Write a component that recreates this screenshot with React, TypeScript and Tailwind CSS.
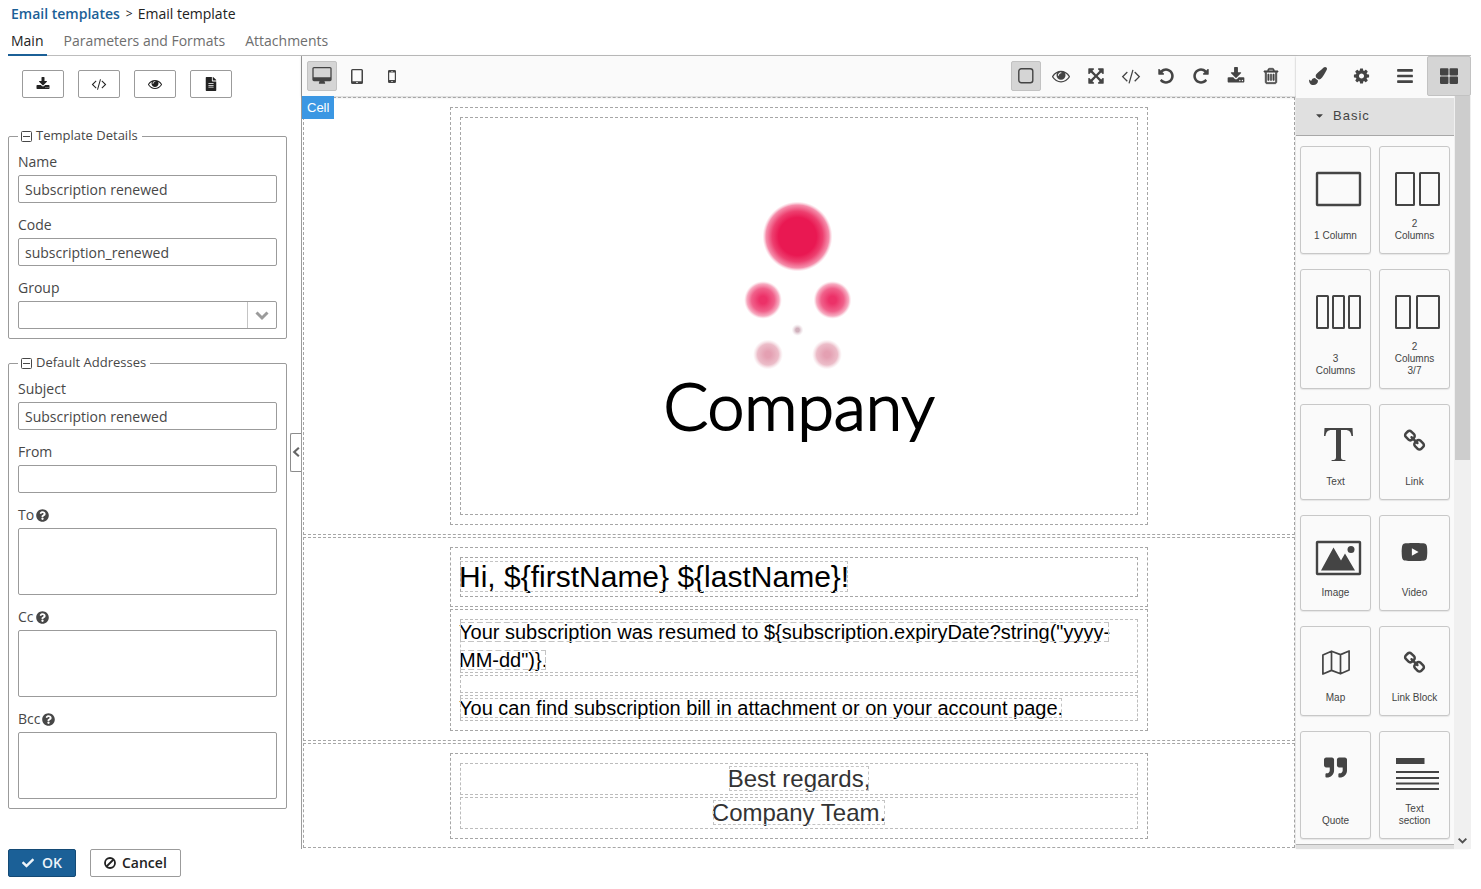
import React from "react";
import {
  FaBars,
  FaCaretDown,
  FaCheck,
  FaFileAlt,
  FaPaintBrush,
  FaQuestionCircle,
  FaQuoteRight,
  FaThLarge,
  FaYoutube,
} from "react-icons/fa";

const paths = {
  download:
    "M1344 1344q0-26-19-45t-45-19-45 19-19 45 19 45 45 19 45-19 19-45zm256 0q0-26-19-45t-45-19-45 19-19 45 19 45 45 19 45-19 19-45zm128-224v320q0 40-28 68t-68 28h-1472q-40 0-68-28t-28-68v-320q0-40 28-68t68-28h465l135 136q58 56 136 56t136-56l136-136h464q40 0 68 28t28 68zm-325-569q17 41-14 70l-448 448q-18 19-45 19t-45-19l-448-448q-31-29-14-70 17-39 59-39h256v-448q0-26 19-45t45-19h256q26 0 45 19t19 45v448h256q42 0 59 39z",
  eye: "M1664 960q-152-236-381-353 61 104 61 225 0 185-131.5 316.5t-316.5 131.5-316.5-131.5-131.5-316.5q0-121 61-225-229 117-381 353 133 205 333.5 326.5t434.5 121.5 434.5-121.5 333.5-326.5zm-720-384q0-20-14-34t-34-14q-125 0-214.5 89.5t-89.5 214.5q0 20 14 34t34 14 34-14 14-34q0-86 61-147t147-61q20 0 34-14t14-34zm848 384q0 34-20 69-140 230-376.5 368.5t-499.5 138.5-499.5-139-376.5-368q-20-35-20-69t20-69q140-229 376.5-368t499.5-139 499.5 139 376.5 368q20 35 20 69z",
  code: "M553 1399l-50 50q-10 10-23 10t-23-10l-466-466q-10-10-10-23t10-23l466-466q10-10 23-10t23 10l50 50q10 10 10 23t-10 23l-393 393 393 393q10 10 10 23t-10 23zm591-1067l-373 1291q-4 13-15.5 19.5t-23.5 2.5l-62-17q-13-4-19.5-15.5t-2.5-24.5l373-1291q4-13 15.5-19.5t23.5-2.5l62 17q13 4 19.5 15.5t2.5 24.5zm657 651l-466 466q-10 10-23 10t-23-10l-50-50q-10-10-10-23t10-23l393-393-393-393q-10-10-10-23t10-23l50-50q10-10 23-10t23 10l466 466q10 10 10 23t-10 23z",
  expand:
    "M1411 541l-355 355 355 355 144-144q29-31 70-14 39 17 39 59v448q0 26-19 45t-45 19h-448q-42 0-59-40-17-39 14-69l144-144-355-355-355 355 144 144q31 30 14 69-17 40-59 40h-448q-26 0-45-19t-19-45v-448q0-42 40-59 39-17 69 14l144 144 355-355-355-355-144 144q-19 19-45 19-12 0-24-5-40-17-40-59v-448q0-26 19-45t45-19h448q42 0 59 40 17 39-14 69l-144 144 355 355 355-355-144-144q-31-30-14-69 17-40 59-40h448q26 0 45 19t19 45v448q0 42-39 59-13 5-25 5-26 0-45-19z",
  undo: "M1664 896q0 156-61 298t-164 245-245 164-298 61q-172 0-327-72.5t-264-204.5q-7-10-6.5-22.5t8.5-20.5l137-138q10-9 25-9 16 2 23 12 73 95 179 147t225 52q104 0 198.5-40.5t163.5-109.5 109.5-163.5 40.5-198.5-40.5-198.5-109.5-163.5-163.5-109.5-198.5-40.5q-98 0-188 35.5t-160 101.5l137 138q31 30 14 69-17 40-59 40h-448q-26 0-45-19t-19-45v-448q0-42 40-59 39-17 69 14l130 129q107-101 244.5-156.5t284.5-55.5q156 0 298 61t245 164 164 245 61 298z",
  trash:
    "M704 736v576q0 14-9 23t-23 9h-64q-14 0-23-9t-9-23v-576q0-14 9-23t23-9h64q14 0 23 9t9 23zm256 0v576q0 14-9 23t-23 9h-64q-14 0-23-9t-9-23v-576q0-14 9-23t23-9h64q14 0 23 9t9 23zm256 0v576q0 14-9 23t-23 9h-64q-14 0-23-9t-9-23v-576q0-14 9-23t23-9h64q14 0 23 9t9 23zm128 724v-948h-896v948q0 22 7 40.5t14.5 27 10.5 8.5h832q3 0 10.5-8.5t14.5-27 7-40.5zm-672-1076h448l-48-117q-7-9-17-11h-317q-10 2-17 11zm928 32v64q0 14-9 23t-23 9h-96v948q0 83-47 143.5t-113 60.5h-832q-66 0-113-58.5t-47-141.5v-952h-96q-14 0-23-9t-9-23v-64q0-14 9-23t23-9h309l70-167q15-37 54-63t79-26h320q40 0 79 26t54 63l70 167h309q14 0 23 9t9 23z",
  cog: "M1152 896q0-106-75-181t-181-75-181 75-75 181 75 181 181 75 181-75 75-181zm512-109v222q0 12-8 23t-20 13l-185 28q-19 54-39 91 35 50 107 138 10 12 10 25t-9 23q-27 37-99 108t-94 71q-12 0-26-9l-138-108q-44 23-91 38-16 136-29 186-7 28-36 28h-222q-14 0-24.5-8.5t-11.5-21.5l-28-184q-49-16-90-37l-141 107q-10 9-25 9-14 0-25-11-126-114-165-168-7-10-7-23 0-12 8-23 15-21 51-66.5t54-70.5q-27-50-41-99l-183-27q-13-2-21-12.5t-8-23.5v-222q0-12 8-23t19-13l186-28q14-46 39-92-40-57-107-138-10-12-10-24 0-10 9-23 26-36 98.5-107.5t94.5-71.5q13 0 26 10l138 107q44-23 91-38 16-136 29-186 7-28 36-28h222q14 0 24.5 8.5t11.5 21.5l28 184q49 16 90 37l142-107q9-9 24-9 13 0 25 10 129 119 165 170 7 8 7 22 0 12-8 23-15 21-51 66.5t-54 70.5q26 50 41 98l183 28q13 2 21 12.5t8 23.5z",
  link: "M1520 1216q0-40-28-68l-208-208q-28-28-68-28-42 0-72 32 3 3 19 18.5t21.5 21.5 15 19 13 25.5 3.5 27.5q0 40-28 68t-68 28q-15 0-27.5-3.5t-25.5-13-19-15-21.5-21.5-18.5-19q-33 31-33 73 0 40 28 68l206 207q27 27 68 27 40 0 68-26l147-146q28-28 28-67zm-703-705q0-40-28-68l-206-207q-28-28-68-28-39 0-68 27l-147 146q-28 28-28 67 0 40 28 68l208 208q27 27 68 27 42 0 72-31-3-3-19-18.5t-21.5-21.5-15-19-13-25.5-3.5-27.5q0-40 28-68t68-28q15 0 27.5 3.5t25.5 13 19 15 21.5 21.5 18.5 19q33-31 33-73zm895 705q0 120-85 203l-147 146q-83 83-203 83-121 0-204-85l-206-207q-83-83-83-203 0-123 88-209l-88-88q-86 88-208 88-120 0-204-84l-208-208q-84-84-84-204t85-203l147-146q83-83 203-83 121 0 204 85l206 207q83 83 83 203 0 123-88 209l88 88q86-88 208-88 120 0 204 84l208 208q84 84 84 204z",
  desktop:
    "M1728 992v-832q0-13-9.5-22.5t-22.5-9.5h-1600q-13 0-22.5 9.5t-9.5 22.5v832q0 13 9.5 22.5t22.5 9.5h1600q13 0 22.5-9.5t9.5-22.5zm128-832v1088q0 66-47 113t-113 47h-544q0 37 16 77.5t32 71 16 43.5q0 26-19 45t-45 19h-512q-26 0-45-19t-19-45q0-14 16-44t32-70 16-78h-544q-66 0-113-47t-47-113v-1088q0-66 47-113t113-47h1600q66 0 113 47t47 113z",
};

function Glyph({ name, className }: { name: keyof typeof paths; className: string }) {
  return (
    <svg viewBox="-64 0 1920 1792" fill="currentColor" aria-hidden="true" className={className}>
      <path d={paths[name]} />
    </svg>
  );
}

function Tablet() {
  return (
    <svg viewBox="0 0 12 15" className="h-[15px] w-3" aria-hidden="true">
      <path
        fill="currentColor"
        fillRule="evenodd"
        d="M1.5 0h9A1.5 1.5 0 0 1 12 1.500v12a1.500 1.500 0 0 1-1.500 1.500h-9A1.500 1.500 0 0 1 0 13.500v-12A1.500 1.500 0 0 1 1.500 0zM1.500 1.200v11h9v-11zM5.300 13.100v1h1.400v-1z"
      />
    </svg>
  );
}

function Phone() {
  return (
    <svg viewBox="0 0 8 13" className="h-[13px] w-2" aria-hidden="true">
      <path
        fill="currentColor"
        fillRule="evenodd"
        d="M1.300 0h5.400A1.300 1.300 0 0 1 8 1.300v10.400A1.300 1.300 0 0 1 6.700 13H1.300A1.300 1.300 0 0 1 0 11.700V1.300A1.300 1.300 0 0 1 1.300 0zM1.200 2.500v7.500h5.600V2.500zM3 1v.6h2V1zM3.400 11v1h1.200v-1z"
      />
    </svg>
  );
}

function Chevron({ className, d }: { className: string; d: string }) {
  return (
    <svg viewBox="0 0 14 14" fill="none" stroke="currentColor" strokeWidth="3" aria-hidden="true" className={className}>
      <path d={d} />
    </svg>
  );
}

const inputBase =
  "block w-full rounded-[2px] border border-[#9b9b9b] bg-white px-1.5 text-sm text-[#474747] outline-none";

function Field({ label, id, value, area, help }: { label: string; id: string; value?: string; area?: boolean; help?: boolean }) {
  return (
    <div>
      <label htmlFor={id} className="mb-[3px] flex h-5 items-center gap-0.5 text-sm">
        {label}
        {help && <FaQuestionCircle className="size-[13px]" />}
      </label>
      {area ? (
        <textarea id={id} className={`${inputBase} h-[67px] resize-none`} />
      ) : (
        <input id={id} defaultValue={value} className={`${inputBase} h-7`} />
      )}
    </div>
  );
}

function Group({ title, children }: { title: string; children: React.ReactNode }) {
  return (
    <fieldset className="min-w-0 rounded-[2px] border border-[#9b9b9b] px-[9px] pb-[9px]">
      <legend className="flex h-5 items-center gap-1 pr-1 pl-[3px] text-[13px]">
        <svg viewBox="0 0 11 11" fill="none" stroke="currentColor" className="size-[11px]" aria-hidden="true">
          <rect x=".5" y=".5" width="10" height="10" rx="1" />
          <path d="M2 5.500h7" />
        </svg>
        {title}
      </legend>
      <div className="flex flex-col gap-3 pt-1.5">{children}</div>
    </fieldset>
  );
}

function SmallButton({ label, children }: { label: string; children: React.ReactNode }) {
  return (
    <button
      aria-label={label}
      className="flex h-7 w-[42px] items-center justify-center rounded-[2px] border border-[#9b9b9b] bg-white text-[#222]"
    >
      {children}
    </button>
  );
}

function Sidebar() {
  return (
    <aside className="relative w-[293px] shrink-0 pr-3.5 pb-10">
      <div className="flex gap-3.5 px-3.5 pt-3.5 pb-7">
        <SmallButton label="Export">
          <Glyph name="download" className="h-[14px] w-4" />
        </SmallButton>
        <SmallButton label="View code">
          <Glyph name="code" className="h-[14px] w-4" />
        </SmallButton>
        <SmallButton label="Preview">
          <Glyph name="eye" className="h-[14px] w-4" />
        </SmallButton>
        <SmallButton label="Report">
          <FaFileAlt className="h-[14px] w-3" />
        </SmallButton>
      </div>
      <div className="flex flex-col gap-3.5">
        <Group title="Template Details">
          <Field label="Name" id="name" value="Subscription renewed" />
          <Field label="Code" id="code" value="subscription_renewed" />
          <div>
            <label htmlFor="group" className="mb-[3px] flex h-5 items-center text-sm">
              Group
            </label>
            <div className="relative">
              <select id="group" className={`${inputBase} h-7 appearance-none`}>
                <option value=""></option>
              </select>
              <span className="pointer-events-none absolute inset-y-px right-px flex w-[29px] items-center justify-center border-l border-[#c4c4c4] text-[#9b9b9b]">
                <Chevron className="size-[14px]" d="M1.500 4.500L7 10l5.500-5.500" />
              </span>
            </div>
          </div>
        </Group>
        <Group title="Default Addresses">
          <Field label="Subject" id="subject" value="Subscription renewed" />
          <Field label="From" id="from" value="" />
          <Field label="To" id="to" area help />
          <Field label="Cc" id="cc" area help />
          <Field label="Bcc" id="bcc" area help />
        </Group>
      </div>
      <button
        aria-label="Collapse panel"
        className="absolute top-[377px] right-0 flex h-[39px] w-[11px] items-center justify-center rounded-l-[2px] border border-r-0 border-[#8c8c8c] bg-white pb-0.5 text-[#666]"
      >
        <Chevron className="h-3 w-[10px]" d="M11 1L4.500 7l6.500 6" />
      </button>
    </aside>
  );
}

function ToolButton({ label, active, children }: { label: string; active?: boolean; children: React.ReactNode }) {
  return (
    <button
      aria-label={label}
      className={`flex size-[30px] items-center justify-center rounded-[2px] ${
        active ? "border border-[#c2c2c2] bg-[#d5d5d5]" : ""
      }`}
    >
      {children}
    </button>
  );
}

const cell = "outline-1 -outline-offset-2 outline-dashed outline-[#a6a6a6]";
const soft = "outline-1 -outline-offset-2 outline-dashed outline-[#bcbcbc]";
const inline = "outline-1 -outline-offset-2 outline-dashed outline-[#c4c4c4]";

function Logo() {
  return (
    <svg viewBox="649 196 300 176" className="h-44 w-[300px]" role="img" aria-label="Company logo">
      <defs>
        <radialGradient id="big">
          <stop offset="0.540" stopColor="#e91852" />
          <stop offset="0.720" stopColor="#ed3f6f" />
          <stop offset="0.900" stopColor="#f58fac" />
          <stop offset="1" stopColor="#f9c3d2" stopOpacity="0" />
        </radialGradient>
        <radialGradient id="mid">
          <stop offset="0.200" stopColor="#ec3168" />
          <stop offset="0.600" stopColor="#f0608a" />
          <stop offset="0.850" stopColor="#f7adc2" />
          <stop offset="1" stopColor="#fbd5df" stopOpacity="0" />
        </radialGradient>
        <radialGradient id="pale">
          <stop offset="0.200" stopColor="#e4a0b2" />
          <stop offset="0.700" stopColor="#ecbdc9" />
          <stop offset="1" stopColor="#f3d9df" stopOpacity="0" />
        </radialGradient>
        <radialGradient id="tiny">
          <stop offset="0.300" stopColor="#d0b0bc" />
          <stop offset="1" stopColor="#e8d8de" stopOpacity="0" />
        </radialGradient>
      </defs>
      <circle cx="797.500" cy="236.500" r="35" fill="url(#big)" />
      <circle cx="763" cy="300" r="19" fill="url(#mid)" />
      <circle cx="832.500" cy="300" r="19" fill="url(#mid)" />
      <circle cx="797.500" cy="330" r="6" fill="url(#tiny)" />
      <circle cx="768" cy="354.500" r="15" fill="url(#pale)" />
      <circle cx="827" cy="354.500" r="15" fill="url(#pale)" />
    </svg>
  );
}

function Editor() {
  return (
    <main className="min-w-0 grow border-l border-[#9b9b9b] font-['Liberation_Sans',Arial,sans-serif]">
      <div className="relative flex h-10 items-center justify-between bg-[#fafafa] pr-[10px] pl-[5px] text-[#444] shadow-[0_1px_3px_rgba(0,0,0,0.2)]">
        <div className="flex gap-[5px]">
          <ToolButton label="Desktop" active>
            <Glyph name="desktop" className="h-[18px] w-5" />
          </ToolButton>
          <ToolButton label="Tablet">
            <Tablet />
          </ToolButton>
          <ToolButton label="Mobile">
            <Phone />
          </ToolButton>
        </div>
        <div className="flex gap-[5px]">
          <ToolButton label="View components" active>
            <svg viewBox="0 0 16 16" fill="none" stroke="currentColor" strokeWidth="1.400" className="size-4" aria-hidden="true">
              <rect x=".8" y=".8" width="14" height="14" rx="2.500" />
            </svg>
          </ToolButton>
          <ToolButton label="Preview">
            <Glyph name="eye" className="h-[18px] w-5" />
          </ToolButton>
          <ToolButton label="Fullscreen">
            <Glyph name="expand" className="h-[18px] w-5" />
          </ToolButton>
          <ToolButton label="View code">
            <Glyph name="code" className="h-[18px] w-5" />
          </ToolButton>
          <ToolButton label="Undo">
            <Glyph name="undo" className="h-[18px] w-5" />
          </ToolButton>
          <ToolButton label="Redo">
            <Glyph name="undo" className="h-[18px] w-5 -scale-x-100" />
          </ToolButton>
          <ToolButton label="Import">
            <Glyph name="download" className="h-[18px] w-5" />
          </ToolButton>
          <ToolButton label="Clear canvas">
            <Glyph name="trash" className="h-[18px] w-5 stroke-current stroke-[60]" />
          </ToolButton>
        </div>
      </div>
      <div className="relative text-black">
        <span className="absolute top-0 left-0 bg-[#3b97e3] px-[5px] text-[13px] leading-[23px] text-white">Cell</span>
        <section className={`${cell} py-2.5`}>
          <div className={`${cell} mx-auto max-w-[700px] p-2.5`}>
            <div className={`${cell} flex flex-col items-center pt-20 pb-[78px]`}>
              <Logo />
              <p className="font-['Lato',sans-serif] text-[66px] leading-[66px] font-light [-webkit-text-stroke:2px_#000]">
                Company
              </p>
            </div>
          </div>
        </section>
        <section className={`${cell} py-2.5`}>
          <div className="mx-auto max-w-[700px]">
            <div className={`${cell} p-2.5`}>
              <h1 className={`${cell} text-[30px] leading-[42px]`}>
                <span className={inline}>{"Hi, ${firstName} ${lastName}!"}</span>
              </h1>
            </div>
            <div className={`${cell} p-2.5 text-xl leading-7`}>
              <p className={soft}>
                <span className={inline}>{'Your subscription was resumed to ${subscription.expiryDate?string("yyyy-MM-dd")}.'}</span>
              </p>
              <p className={`${soft} h-5`} />
              <p className={soft}>
                <span className={inline}>You can find subscription bill in attachment or on your account page.</span>
              </p>
            </div>
          </div>
        </section>
        <section className={`${cell} pt-2.5 pb-[9px]`}>
          <div className={`${cell} mx-auto max-w-[700px] p-2.5 text-center text-2xl leading-[34px] text-[#333]`}>
            <p className={soft}>
              <span className={inline}>Best regards,</span>
            </p>
            <p className={soft}>
              <span className={inline}>Company Team.</span>
            </p>
          </div>
        </section>
      </div>
    </main>
  );
}

function Wide({ children }: { children: React.ReactNode }) {
  return (
    <svg viewBox="0 0 69 71" fill="none" stroke="currentColor" strokeWidth="2" className="h-[71px] w-[69px]" aria-hidden="true">
      {children}
    </svg>
  );
}

function Slot({ children }: { children: React.ReactNode }) {
  return <span className="flex h-[65px] items-center justify-center pt-1.5">{children}</span>;
}

const blocks: { label: string; icon: React.ReactNode }[] = [
  { label: "1 Column", icon: <Wide><rect x="16" y="26" width="43" height="32" rx=".5" strokeWidth="2.400" /></Wide> },
  {
    label: "2 Columns",
    icon: <Wide><rect x="16" y="26" width="18" height="32" rx=".5" /><rect x="40" y="26" width="19" height="32" rx=".5" /></Wide>,
  },
  {
    label: "3 Columns",
    icon: (
      <Wide>
        <rect x="16" y="26" width="11" height="32" rx=".5" />
        <rect x="32" y="26" width="11" height="32" rx=".5" />
        <rect x="48" y="26" width="11" height="32" rx=".5" />
      </Wide>
    ),
  },
  {
    label: "2 Columns 3/7",
    icon: <Wide><rect x="16" y="26" width="14" height="32" rx=".5" /><rect x="37" y="26" width="22" height="32" rx=".5" /></Wide>,
  },
  {
    label: "Text",
    icon: (
      <Wide>
        <path
          fill="currentColor"
          stroke="none"
          d="M23.500 23h28l.5 8h-1.500c-.6-4-2.200-6-6-6H40v27c0 2.500 1 3 4.500 3.200V56H30.500v-.8c3.500-.2 4.500-.7 4.500-3.200V25h-4.500c-3.800 0-5.400 2-6 6H23z"
        />
      </Wide>
    ),
  },
  { label: "Link", icon: <Slot><Glyph name="link" className="h-[24px] w-[25px]" /></Slot> },
  {
    label: "Image",
    icon: (
      <Wide>
        <rect x="16" y="26" width="43" height="32" rx=".5" strokeWidth="2.400" />
        <path fill="currentColor" stroke="none" d="M20 54.500L32.500 31.500l7.500 13 4-7 10 17z" />
        <circle cx="50" cy="33.500" r="3.500" fill="currentColor" stroke="none" />
      </Wide>
    ),
  },
  { label: "Video", icon: <Slot><FaYoutube className="h-[24px] w-[27px]" /></Slot> },
  {
    label: "Map",
    icon: (
      <Slot>
        <svg viewBox="0 0 28 25" fill="none" stroke="currentColor" strokeWidth="1.700" strokeLinejoin="round" className="h-[25px] w-7" aria-hidden="true">
          <path d="M.9 5l8.600-3.800 9 3.400 8.600-3.600v19l-8.600 3.800-9-3.400L.9 24zM9.500 1.200v19.200M18.500 4.600v19.200" />
        </svg>
      </Slot>
    ),
  },
  { label: "Link Block", icon: <Slot><Glyph name="link" className="h-[24px] w-[25px]" /></Slot> },
  { label: "Quote", icon: <Slot><FaQuoteRight className="size-[23px]" /></Slot> },
  {
    label: "Text section",
    icon: (
      <Wide>
        <path strokeWidth="6" d="M16 29h28.500" />
        <path d="M16 40h43M16 46h43M16 51.500h43M16 57h43" />
      </Wide>
    ),
  },
];

function BlockPanel() {
  return (
    <aside className="relative w-[175px] shrink-0 bg-[#fafafa] font-['Liberation_Sans',Arial,sans-serif] text-[#444] shadow-[-1px_0_2px_-1px_rgba(0,0,0,0.3)]">
      <div className="grid h-10 grid-cols-4">
        <button aria-label="Styles" className="flex items-center justify-center">
          <FaPaintBrush className="size-[18px]" />
        </button>
        <button aria-label="Settings" className="flex items-center justify-center">
          <Glyph name="cog" className="h-[18px] w-[19px]" />
        </button>
        <button aria-label="Layers" className="flex items-center justify-center">
          <FaBars className="size-[18px]" />
        </button>
        <button aria-label="Blocks" className="flex items-center justify-center rounded-[2px] border border-[#c2c2c2] bg-[#d5d5d5]">
          <FaThLarge className="size-[18px]" />
        </button>
      </div>
      <div className="flex">
        <div className="w-[158px]">
          <button className="mt-0.5 flex h-[38px] w-full items-center gap-2 border-b border-[#a8a8a8] bg-[#e0e0e0] pb-0.5 pl-[18px] text-[13px] tracking-[1px]">
            <FaCaretDown className="size-[11px]" />
            Basic
          </button>
          <div className="grid grid-cols-2 gap-x-2 gap-y-[15px] px-1 pt-2.5 pb-[5px]">
            {blocks.map((b) => (
              <button
                key={b.label}
                className="flex flex-col rounded-[3px] border border-[#c8c8c8] bg-[#fafafa] pb-[11px] text-[10px] leading-3 shadow-[0_1px_1px_rgba(0,0,0,0.08)]"
              >
                <span className="block w-full">{b.icon}</span>
                <span className="mt-auto w-full px-2 text-center">
                  {b.label.startsWith("Link") || b.label.startsWith("1") ? (
                    <span className="whitespace-nowrap">{b.label}</span>
                  ) : (
                    b.label.split(" ").map((word) => (
                      <span key={word} className="block">
                        {word}
                      </span>
                    ))
                  )}
                </span>
              </button>
            ))}
          </div>
          <div className="h-[5px] border-t border-[#b4b4b4] bg-[#e0e0e0]" />
        </div>
        <div className="flex grow flex-col justify-between bg-[#f0f0f0]">
          <div className="mx-px h-[364px] bg-[#cdcdcd]" />
          <Chevron className="mx-auto mb-1 size-[9px] text-[#505050]" d="M1 4l6 6 6-6" />
        </div>
      </div>
    </aside>
  );
}

export default function App() {
  return (
    <div className="bg-white pr-[10px] pl-2 font-['Open_Sans',sans-serif] text-[#474747]">
      <nav aria-label="Breadcrumb" className="flex h-7 items-center gap-[5px] pl-[3px] text-sm text-[#222]">
        <a href="#templates" className="font-semibold text-[#1b6097]">
          Email templates
        </a>
        <span className="ml-px text-xs">&gt;</span>
        <span>Email template</span>
      </nav>
      <div role="tablist" className="flex h-7 gap-3.5 border-b border-[#bdbdbd] text-sm text-[#6e6e6e]">
        <button role="tab" aria-selected="true" className="-mb-px border-b-2 border-[#1b6097] px-[3px] text-[#222]">
          Main
        </button>
        <button role="tab" aria-selected="false" className="px-[3px] pb-px">
          Parameters and Formats
        </button>
        <button role="tab" aria-selected="false" className="px-[3px] pb-px">
          Attachments
        </button>
      </div>
      <div className="flex">
        <Sidebar />
        <Editor />
        <BlockPanel />
      </div>
      <footer className="flex gap-3.5 text-sm font-semibold">
        <button className="flex h-7 items-center gap-2 rounded-[2px] border border-[#144a75] bg-[#1b6097] px-[13px] text-[#eef4f9]">
          <FaCheck className="size-3" />
          OK
        </button>
        <button className="flex h-7 items-center gap-1.5 rounded-[2px] border border-[#9b9b9b] bg-white px-[13px] text-[#222]">
          <svg viewBox="0 0 12 12" fill="none" stroke="currentColor" strokeWidth="1.800" className="size-3" aria-hidden="true">
            <circle cx="6" cy="6" r="5" />
            <path d="M2.500 9.500l7-7" />
          </svg>
          Cancel
        </button>
      </footer>
    </div>
  );
}
